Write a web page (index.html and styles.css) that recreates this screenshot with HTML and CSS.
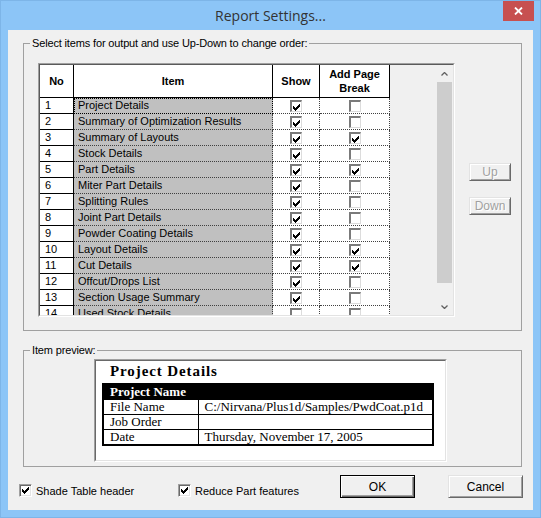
FILE: index.html
```html
<!DOCTYPE html>
<html lang="en">
<head>
<meta charset="utf-8">
<title>Report Settings...</title>
<link rel="stylesheet" href="styles.css">
</head>
<body>
<svg class="sprite" width="0" height="0" aria-hidden="true">
  <defs>
    <path id="chk" d="M6 0h1v1h-1zM5 1h2v1h-2zM0 2h1v1h-1zM4 2h3v1h-3zM0 3h2v1h-2zM3 3h3v1h-3zM0 4h5v1h-5zM1 5h3v1h-3zM2 6h1v1h-1z"/>
  </defs>
</svg>
<div class="window">
  <div class="titlebar">
    <span class="title">Report Settings...</span>
    <button class="close" aria-label="Close"><svg width="9" height="8" viewBox="0 0 9 8"><path d="M1 0.5L8 7.5M8 0.5L1 7.5" stroke="#fff" stroke-width="1.8"/></svg></button>
  </div>
  <div class="client">
    <fieldset class="group group-items">
      <legend>Select items for output and use Up-Down to change order:</legend>
      <div class="items-body">
        <div class="grid">
          <div class="grid-inner">
            <div class="cells">
              <div class="sheet">
                <div class="hd">No</div>
                <div class="hd">Item</div>
                <div class="hd">Show</div>
                <div class="hd">Add Page<br>Break</div>

                <div class="c-no">1</div><div class="c-item focus">Project Details</div>
                <div class="c-chk"><span class="cb"><svg width="7" height="7" viewBox="0 0 7 7"><use href="#chk"/></svg></span></div>
                <div class="c-chk"><span class="cb"></span></div>

                <div class="c-no">2</div><div class="c-item">Summary of Optimization Results</div>
                <div class="c-chk"><span class="cb"><svg width="7" height="7" viewBox="0 0 7 7"><use href="#chk"/></svg></span></div>
                <div class="c-chk"><span class="cb"></span></div>

                <div class="c-no">3</div><div class="c-item">Summary of Layouts</div>
                <div class="c-chk"><span class="cb"><svg width="7" height="7" viewBox="0 0 7 7"><use href="#chk"/></svg></span></div>
                <div class="c-chk"><span class="cb"><svg width="7" height="7" viewBox="0 0 7 7"><use href="#chk"/></svg></span></div>

                <div class="c-no">4</div><div class="c-item">Stock Details</div>
                <div class="c-chk"><span class="cb"><svg width="7" height="7" viewBox="0 0 7 7"><use href="#chk"/></svg></span></div>
                <div class="c-chk"><span class="cb"></span></div>

                <div class="c-no">5</div><div class="c-item">Part Details</div>
                <div class="c-chk"><span class="cb"><svg width="7" height="7" viewBox="0 0 7 7"><use href="#chk"/></svg></span></div>
                <div class="c-chk"><span class="cb"><svg width="7" height="7" viewBox="0 0 7 7"><use href="#chk"/></svg></span></div>

                <div class="c-no">6</div><div class="c-item">Miter Part Details</div>
                <div class="c-chk"><span class="cb"><svg width="7" height="7" viewBox="0 0 7 7"><use href="#chk"/></svg></span></div>
                <div class="c-chk"><span class="cb"></span></div>

                <div class="c-no">7</div><div class="c-item">Splitting Rules</div>
                <div class="c-chk"><span class="cb"><svg width="7" height="7" viewBox="0 0 7 7"><use href="#chk"/></svg></span></div>
                <div class="c-chk"><span class="cb"></span></div>

                <div class="c-no">8</div><div class="c-item">Joint Part Details</div>
                <div class="c-chk"><span class="cb"><svg width="7" height="7" viewBox="0 0 7 7"><use href="#chk"/></svg></span></div>
                <div class="c-chk"><span class="cb"></span></div>

                <div class="c-no">9</div><div class="c-item">Powder Coating Details</div>
                <div class="c-chk"><span class="cb"><svg width="7" height="7" viewBox="0 0 7 7"><use href="#chk"/></svg></span></div>
                <div class="c-chk"><span class="cb"></span></div>

                <div class="c-no">10</div><div class="c-item">Layout Details</div>
                <div class="c-chk"><span class="cb"><svg width="7" height="7" viewBox="0 0 7 7"><use href="#chk"/></svg></span></div>
                <div class="c-chk"><span class="cb"><svg width="7" height="7" viewBox="0 0 7 7"><use href="#chk"/></svg></span></div>

                <div class="c-no">11</div><div class="c-item">Cut Details</div>
                <div class="c-chk"><span class="cb"><svg width="7" height="7" viewBox="0 0 7 7"><use href="#chk"/></svg></span></div>
                <div class="c-chk"><span class="cb"><svg width="7" height="7" viewBox="0 0 7 7"><use href="#chk"/></svg></span></div>

                <div class="c-no">12</div><div class="c-item">Offcut/Drops List</div>
                <div class="c-chk"><span class="cb"><svg width="7" height="7" viewBox="0 0 7 7"><use href="#chk"/></svg></span></div>
                <div class="c-chk"><span class="cb"></span></div>

                <div class="c-no">13</div><div class="c-item">Section Usage Summary</div>
                <div class="c-chk"><span class="cb"><svg width="7" height="7" viewBox="0 0 7 7"><use href="#chk"/></svg></span></div>
                <div class="c-chk"><span class="cb"></span></div>

                <div class="c-no">14</div><div class="c-item">Used Stock Details</div>
                <div class="c-chk"><span class="cb"></span></div>
                <div class="c-chk"><span class="cb"></span></div>
              </div>
            </div>
            <div class="scrollbar">
              <div class="sb-arrow"><svg width="7" height="4" viewBox="0 0 7 4"><path d="M0.5 3.5L3.5 0.5L6.5 3.5" fill="none" stroke="#606060" stroke-width="1.3"/></svg></div>
              <div class="sb-thumb"></div>
              <div class="sb-track"></div>
              <div class="sb-arrow"><svg width="7" height="4" viewBox="0 0 7 4"><path d="M0.5 0.5L3.5 3.5L6.5 0.5" fill="none" stroke="#606060" stroke-width="1.3"/></svg></div>
            </div>
          </div>
        </div>
        <div class="side-buttons">
          <button class="btn btn-small" disabled>Up</button>
          <button class="btn btn-small" disabled>Down</button>
        </div>
      </div>
    </fieldset>

    <fieldset class="group group-preview">
      <legend>Item preview:</legend>
      <div class="preview-body">
        <div class="preview">
          <div class="preview-inner">
            <div class="ptitle">Project Details</div>
            <table class="ptable">
              <tr><th colspan="2">Project Name</th></tr>
              <tr><td class="k">File Name</td><td>C:/Nirvana/Plus1d/Samples/PwdCoat.p1d</td></tr>
              <tr><td class="k">Job Order</td><td></td></tr>
              <tr><td class="k">Date</td><td>Thursday, November 17, 2005</td></tr>
            </table>
          </div>
        </div>
      </div>
    </fieldset>

    <div class="footer">
      <label class="check shade"><span class="box"><svg width="7" height="7" viewBox="0 0 7 7"><use href="#chk"/></svg></span>Shade Table header</label>
      <label class="check reduce"><span class="box"><svg width="7" height="7" viewBox="0 0 7 7"><use href="#chk"/></svg></span>Reduce Part features</label>
      <button class="btn btn-ok">OK</button>
      <button class="btn btn-cancel">Cancel</button>
    </div>
  </div>
</div>
</body>
</html>
```

FILE: styles.css
```css
* { box-sizing: border-box; }

html, body {
  margin: 0;
  padding: 0;
}

body {
  width: 541px;
  height: 518px;
  overflow: hidden;
  font-family: "Liberation Sans", Arial, sans-serif;
  font-size: 11px;
  color: #000;
  background: #8cc5f7;
}

.sprite {
  display: block;
  width: 0;
  height: 0;
  overflow: hidden;
}

svg use, .sprite path { fill: #000; }
svg { shape-rendering: crispEdges; }
.close svg, .sb-arrow svg { shape-rendering: auto; }

.window {
  width: 541px;
  height: 518px;
  background: #8cc5f7;
  border: 1px solid #7db5e8;
  display: flex;
  flex-direction: column;
}

/* title bar */
.titlebar {
  height: 29px;
  display: grid;
  grid-template-columns: 1fr auto 1fr;
}

.title {
  grid-column: 2;
  align-self: center;
  font-family: "Open Sans", "Liberation Sans", sans-serif;
  font-size: 14px;
  color: #333;
  padding-bottom: 1px;
}

.close {
  grid-column: 3;
  justify-self: end;
  align-self: start;
  width: 31px;
  height: 20px;
  margin-right: 6px;
  border: 0;
  padding: 0;
  background: #c75050;
  display: flex;
  align-items: center;
  justify-content: center;
}

/* client */
.client {
  margin-left: 7px;
  width: 525px;
  height: 480px;
  background: #f0f0f0;
  padding: 0 11px 0 15px;
  display: flex;
  flex-direction: column;
}

.group {
  margin: 0;
  padding: 0;
  min-width: 0;
  border: 1px solid #a0a0a0;
}

.group legend {
  margin-left: 6px;
  padding: 0 2px;
  line-height: 13px;
  font-size: 11px;
  letter-spacing: -0.15px;
}

.group-items { margin-top: 7px; }
.group-preview { margin-top: 13px; }

.items-body {
  display: flex;
  padding: 13px 0 13px 14px;
}

/* grid control */
.grid {
  width: 417px;
  height: 254px;
  border: 1px solid;
  border-color: #a0a0a0 #fff #fff #a0a0a0;
  flex-shrink: 0;
}

.grid-inner {
  height: 100%;
  border: 1px solid;
  border-color: #5a5a5a #e3e3e3 #e3e3e3 #5a5a5a;
  display: flex;
}

.cells {
  flex: 1;
  overflow: hidden;
  background: #f0f0f0;
}

.sheet {
  display: grid;
  grid-template-columns: 34px 199px 47px 70px;
  grid-template-rows: 33px;
  grid-auto-rows: 16px;
  width: 350px;
}

.hd {
  background: #fff;
  border-right: 1px solid #000;
  border-bottom: 1px solid #000;
  font-weight: bold;
  line-height: 14px;
  display: flex;
  align-items: center;
  justify-content: center;
  text-align: center;
}

.c-no {
  background: #fff;
  border-right: 1px solid #000;
  border-bottom: 1px solid #000;
  padding-left: 5px;
  line-height: 15px;
}

.c-item {
  background: #c0c0c0;
  border-right: 1px dotted #404040;
  border-bottom: 1px dotted #404040;
  padding-left: 4px;
  line-height: 15px;
  white-space: nowrap;
  overflow: hidden;
}

.c-item.focus {
  outline: 1px dotted #000;
  outline-offset: -1px;
}

.c-chk {
  background: #fff;
  border-right: 1px dotted #404040;
  border-bottom: 1px dotted #404040;
  display: flex;
  align-items: center;
  justify-content: center;
}

.cb {
  width: 12px;
  height: 12px;
  background: #fff;
  border-style: solid;
  border-width: 2px 1px 1px 2px;
  border-color: #7a7a7a #dcdcdc #dcdcdc #7a7a7a;
  padding: 2px 0 0 1px;
  display: flex;
  align-items: flex-start;
}

/* scrollbar */
.scrollbar {
  width: 17px;
  flex-shrink: 0;
  display: flex;
  flex-direction: column;
  background: #f0f0f0;
}

.sb-arrow {
  height: 17px;
  display: flex;
  align-items: center;
  justify-content: center;
}

.sb-thumb {
  height: 201px;
  margin: 0 1px;
  background: #cdcdcd;
}

.sb-track { flex: 1; }

/* buttons */
.btn {
  font-family: "Liberation Sans", Arial, sans-serif;
  font-size: 11px;
  color: #000;
  background: #f0f0f0;
  padding: 0;
  border: 1px solid;
  border-color: #e3e3e3 #696969 #696969 #e3e3e3;
  box-shadow: inset 1px 1px 0 #fff, inset -1px -1px 0 #a0a0a0;
  flex-shrink: 0;
}

.btn:disabled {
  color: #a0a0a0;
  text-shadow: 1px 1px 0 #fff;
}

.side-buttons {
  display: flex;
  flex-direction: column;
  gap: 16px;
  padding-top: 100px;
  margin-left: 14px;
}

.btn-small {
  width: 42px;
  height: 18px;
  font-size: 12px;
}

.btn-ok {
  width: 75px;
  height: 23px;
  border-color: #000;
  box-shadow: inset 1px 1px 0 #fff, inset -1px -1px 0 #696969, inset -2px -2px 0 #a0a0a0;
  font-size: 12px;
}

.btn-cancel {
  width: 75px;
  height: 23px;
  margin-left: 33px;
  font-size: 12px;
}

/* preview */
.preview-body {
  padding: 2px 0 4px 70px;
}

.preview {
  width: 353px;
  height: 103px;
  border: 1px solid;
  border-color: #a0a0a0 #fff #fff #a0a0a0;
}

.preview-inner {
  height: 100%;
  background: #fff;
  border: 1px solid;
  border-color: #696969 #e3e3e3 #e3e3e3 #696969;
}

.ptitle {
  font-family: "Liberation Serif", "Times New Roman", serif;
  font-weight: bold;
  font-size: 15px;
  letter-spacing: 0.9px;
  line-height: 20px;
  margin-left: 14px;
}

.ptable {
  border-collapse: collapse;
  border: 2px solid #000;
  width: 332px;
  margin: 2px 0 0 6px;
  font-family: "Liberation Serif", "Times New Roman", serif;
  font-size: 13px;
}

.ptable th {
  background: #000;
  color: #fff;
  text-align: left;
  font-weight: bold;
  padding: 0 6px;
  height: 14px;
  line-height: 14px;
}

.ptable td {
  border: 1px solid #000;
  padding: 0 6px;
  height: 15px;
  line-height: 14px;
  white-space: nowrap;
}

.ptable td.k { width: 95px; }

/* footer */
.footer {
  display: flex;
  align-items: flex-end;
  height: 23px;
  margin: 8px 0 0 -4px;
}

.check {
  display: flex;
  align-items: center;
  gap: 4px;
  height: 13px;
  margin-bottom: 1px;
  flex-shrink: 0;
  font-size: 11px;
}

.shade { width: 159px; }
.reduce { width: 162px; }

.box {
  width: 13px;
  height: 13px;
  background: #fff;
  border: 1px solid;
  border-color: #a0a0a0 #fff #fff #a0a0a0;
  box-shadow: inset 1px 1px 0 #696969, inset -1px -1px 0 #e3e3e3;
  padding: 2px 0 0 2px;
  display: flex;
  align-items: flex-start;
  flex-shrink: 0;
}
```
